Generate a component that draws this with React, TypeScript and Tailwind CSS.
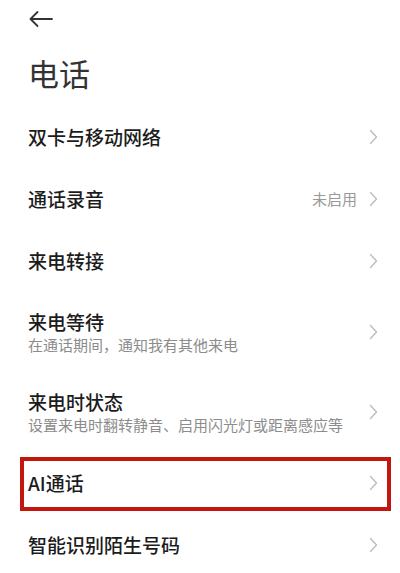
import React from 'react'

const FONT = '"Noto Sans CJK SC", "Noto Sans", sans-serif'

interface Item {
    title:     string
    subtitle?: string
    value?:    string
    marked?:   boolean
    weight?:   'medium' | 'normal'
}

const ITEMS: Item[] = [
    { title: '双卡与移动网络' },
    { title: '通话录音', value: '未启用' },
    { title: '来电转接' },
    { title: '来电等待', subtitle: '在通话期间，通知我有其他来电' },
    { title: '来电时状态', subtitle: '设置来电时翻转静音、启用闪光灯或距离感应等' },
    { title: 'AI通话', marked: true },
    { title: '智能识别陌生号码' },
]

function Chevron() {
    return (
        <svg width="9" height="16" viewBox="0 0 9 16" className="flex-shrink-0">
            <polyline points="1.5,1.5 7.5,8 1.5,14.5" fill="none" stroke="#bdbdbd" strokeWidth="1.4" strokeLinecap="round" strokeLinejoin="round" />
        </svg>
    )
}

function Row({ item }: { item: Item }) {
    return (
        <div className={`relative flex items-center pl-7 pr-[22px] ${item.subtitle ? 'h-[80px]' : 'h-[62px]'}`}>
            <div className="flex-1 min-w-0">
                <div className="text-[19px] leading-[24px] font-medium text-[#1c1c1c]">{item.title}</div>
                {item.subtitle && (
                    <div className="text-[15px] leading-[20px] text-[#8c8c8c] mt-[1px] whitespace-nowrap">{item.subtitle}</div>
                )}
            </div>
            {item.value && (
                <span className="text-[15px] text-[#999999] mr-[12px]">{item.value}</span>
            )}
            <Chevron />
            {item.marked && (
                <div className="absolute top-[5px] h-[54px] left-[20px] right-[9px] border-4 border-[#c2170f]" />
            )}
        </div>
    )
}

export default function App() {
    return (
        <div className="w-[400px] h-[573px] overflow-hidden bg-white" style={{ fontFamily: FONT }}>
            {/* Header */}
            <div className="h-[106px] pl-7 pt-[10px]">
                <svg width="26" height="18" viewBox="0 0 26 18" className="block">
                    <path d="M2.5 9 H24 M9.5 2 L2.5 9 L9.5 16" fill="none" stroke="#333" strokeWidth="1.8" strokeLinecap="round" strokeLinejoin="round" />
                </svg>
                <h1 className="mt-[26px] text-[31px] leading-[38px] font-normal text-[#333333]">电话</h1>
            </div>

            {ITEMS.map((item, i) => (
                <Row key={i} item={item} />
            ))}
        </div>
    )
}
